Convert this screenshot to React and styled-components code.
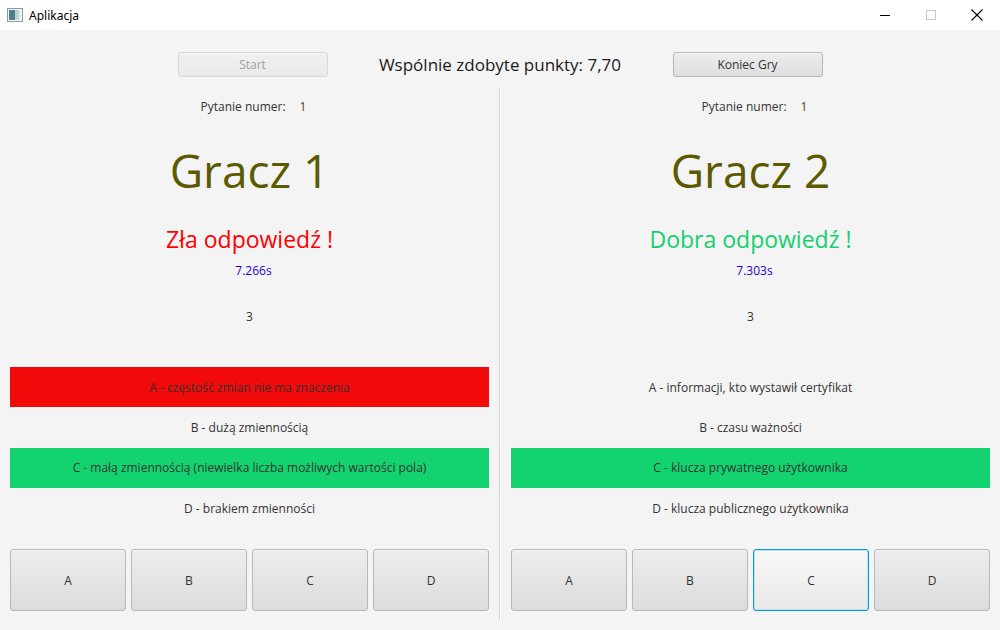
import React from 'react';
import styled, { createGlobalStyle } from 'styled-components';

const GlobalStyle = createGlobalStyle`
  html, body {
    margin: 0;
    padding: 0;
    background: #f4f4f4;
  }
  body {
    font-family: "Segoe UI", "Open Sans", "Noto Sans", sans-serif;
    color: #333;
  }
`;

const players = [
  {
    name: 'Gracz 1',
    question: '1',
    result: 'Zła odpowiedź !',
    good: false,
    time: '7.266s',
    counter: '3',
    answers: [
      { text: 'A - częstość zmian nie ma znaczenia', mark: 'wrong' },
      { text: 'B - dużą zmiennością' },
      { text: 'C - małą zmiennością (niewielka liczba możliwych wartości pola)', mark: 'right' },
      { text: 'D - brakiem zmienności' },
    ],
    focused: null,
  },
  {
    name: 'Gracz 2',
    question: '1',
    result: 'Dobra odpowiedź !',
    good: true,
    time: '7.303s',
    counter: '3',
    answers: [
      { text: 'A -  informacji, kto wystawił certyfikat' },
      { text: 'B - czasu ważności' },
      { text: 'C - klucza prywatnego użytkownika', mark: 'right' },
      { text: 'D - klucza publicznego użytkownika' },
    ],
    focused: 'C',
  },
];

const WindowIcon = () => (
  <svg width="16" height="14" viewBox="0 0 16 14">
    <rect x="0.5" y="0.5" width="15" height="13" fill="#f4f6f8" stroke="#8a9aa8" />
    <rect x="2" y="2" width="6" height="10" fill="#4f7f8c" />
    <rect x="8" y="2" width="4" height="10" fill="#b9d6c9" />
    <rect x="12" y="2" width="2" height="10" fill="#e6eef2" />
  </svg>
);

const App = () => (
  <>
    <GlobalStyle />
    <Window>
      <TitleBar>
        <TitleLeft>
          <WindowIcon />
          <TitleText>Aplikacja</TitleText>
        </TitleLeft>
        <Controls>
          <Control>
            <svg width="10" height="10" viewBox="0 0 10 10">
              <line x1="0" y1="5.5" x2="10" y2="5.5" stroke="#000" strokeWidth="1" />
            </svg>
          </Control>
          <Control>
            <svg width="10" height="10" viewBox="0 0 10 10">
              <rect x="0.5" y="0.5" width="9" height="9" fill="none" stroke="#c6c6c6" strokeWidth="1" />
            </svg>
          </Control>
          <Control>
            <svg width="12" height="12" viewBox="0 0 12 12">
              <path d="M0.5 0.5 L11.5 11.5 M11.5 0.5 L0.5 11.5" stroke="#000" strokeWidth="1.1" />
            </svg>
          </Control>
        </Controls>
      </TitleBar>

      <Content>
        <TopBar>
          <FxButton disabled>Start</FxButton>
          <Score>Wspólnie zdobyte punkty: 7,70</Score>
          <FxButton>Koniec Gry</FxButton>
        </TopBar>

        <Panels>
          {players.map((p, i) => (
            <React.Fragment key={p.name}>
              {i > 0 && <Divider />}
              <Panel>
                <QuestionRow>
                  <span>Pytanie numer:</span>
                  <QuestionNo>{p.question}</QuestionNo>
                </QuestionRow>
                <PlayerName>{p.name}</PlayerName>
                <Result good={p.good}>{p.result}</Result>
                <Time>{p.time}</Time>
                <Counter>{p.counter}</Counter>
                <Answers>
                  {p.answers.map((a) => (
                    <Answer key={a.text} mark={a.mark}>{a.text}</Answer>
                  ))}
                </Answers>
                <Choices>
                  {['A', 'B', 'C', 'D'].map((l) => (
                    <ChoiceButton key={l} focused={p.focused === l}>{l}</ChoiceButton>
                  ))}
                </Choices>
              </Panel>
            </React.Fragment>
          ))}
        </Panels>
      </Content>
    </Window>
  </>
);

export default App;

const Window = styled.div`
  width: 1000px;
  height: 630px;
  display: flex;
  flex-direction: column;
  overflow: hidden;
`;

const TitleBar = styled.div`
  height: 30px;
  background: #fff;
  display: flex;
  align-items: center;
  justify-content: space-between;
  flex-shrink: 0;
`;

const TitleLeft = styled.div`
  display: flex;
  align-items: center;
  padding-left: 7px;
  gap: 6px;
`;

const TitleText = styled.span`
  font-size: 12px;
  color: #000;
  font-family: "Segoe UI", "Noto Sans", sans-serif;
`;

const Controls = styled.div`
  display: flex;
  height: 100%;
`;

const Control = styled.div`
  width: 46px;
  height: 100%;
  display: flex;
  align-items: center;
  justify-content: center;
`;

const Content = styled.div`
  flex: 1;
  display: flex;
  flex-direction: column;
  background: #f4f4f4;
`;

const TopBar = styled.div`
  height: 58px;
  display: grid;
  grid-template-columns: 150px 345px 150px;
  justify-content: center;
  align-items: center;
  padding-top: 11px;
  box-sizing: border-box;
`;

const FxButton = styled.button`
  width: 150px;
  height: 25px;
  border: 1px solid #b6b6b6;
  border-radius: 3px;
  background: linear-gradient(#ededed, #dedede);
  font-family: inherit;
  font-size: 12px;
  color: #333;
  padding: 0;
  box-shadow: inset 0 1px 0 #f8f8f8;
  &:disabled {
    opacity: 0.45;
  }
`;

const Score = styled.div`
  font-size: 17px;
  color: #1a1a1a;
  text-align: center;
`;

const Panels = styled.div`
  display: flex;
  flex: 1;
  padding-bottom: 10px;
`;

const Divider = styled.div`
  width: 1px;
  background: #d4d4d4;
  border-right: 1px solid #fff;
  flex-shrink: 0;
`;

const Panel = styled.div`
  flex: 1;
  display: flex;
  flex-direction: column;
  padding: 0 10px;
`;

const QuestionRow = styled.div`
  height: 36px;
  display: flex;
  align-items: center;
  justify-content: center;
  gap: 14px;
  font-size: 12px;
  color: #333;
  padding-left: 8px;
`;

const QuestionNo = styled.span`
  color: #5a3a1a;
`;

const PlayerName = styled.div`
  height: 92px;
  display: flex;
  align-items: center;
  justify-content: center;
  font-size: 46px;
  color: #5c5a00;
`;

const Result = styled.div`
  height: 46px;
  display: flex;
  align-items: center;
  justify-content: center;
  font-size: 23px;
  color: ${(props) => (props.good ? '#13d06e' : '#ff0000')};
`;

const Time = styled.div`
  height: 16px;
  display: flex;
  align-items: center;
  justify-content: center;
  font-size: 12px;
  color: #2a00d0;
  padding-left: 8px;
`;

const Counter = styled.div`
  height: 76px;
  display: flex;
  align-items: center;
  justify-content: center;
  font-size: 12px;
  color: #333;
  margin-bottom: 13px;
`;

const Answers = styled.div`
  display: grid;
  grid-template-rows: repeat(4, 40.3px);
`;

const Answer = styled.div`
  display: flex;
  align-items: center;
  justify-content: center;
  font-size: 12px;
  color: #333;
  background: ${(props) => {
    if (props.mark === 'wrong') return '#f20909';
    if (props.mark === 'right') return '#12d370';
    return 'transparent';
  }};
`;

const Choices = styled.div`
  margin-top: 21px;
  display: grid;
  grid-template-columns: repeat(4, 1fr);
  gap: 5px;
`;

const ChoiceButton = styled.button`
  height: 62px;
  border: 1px solid ${(props) => (props.focused ? '#0a9ad8' : '#b8b8b8')};
  border-radius: 3px;
  background: ${(props) => (props.focused
    ? 'linear-gradient(#f8f8f8, #e8e8e8)'
    : 'linear-gradient(#ededed, #dcdcdc)')};
  box-shadow: ${(props) => (props.focused ? 'inset 0 0 0 1px #b9e2f3' : 'inset 0 1px 0 #f6f6f6')};
  font-family: inherit;
  font-size: 12px;
  color: #333;
  padding: 0;
`;
